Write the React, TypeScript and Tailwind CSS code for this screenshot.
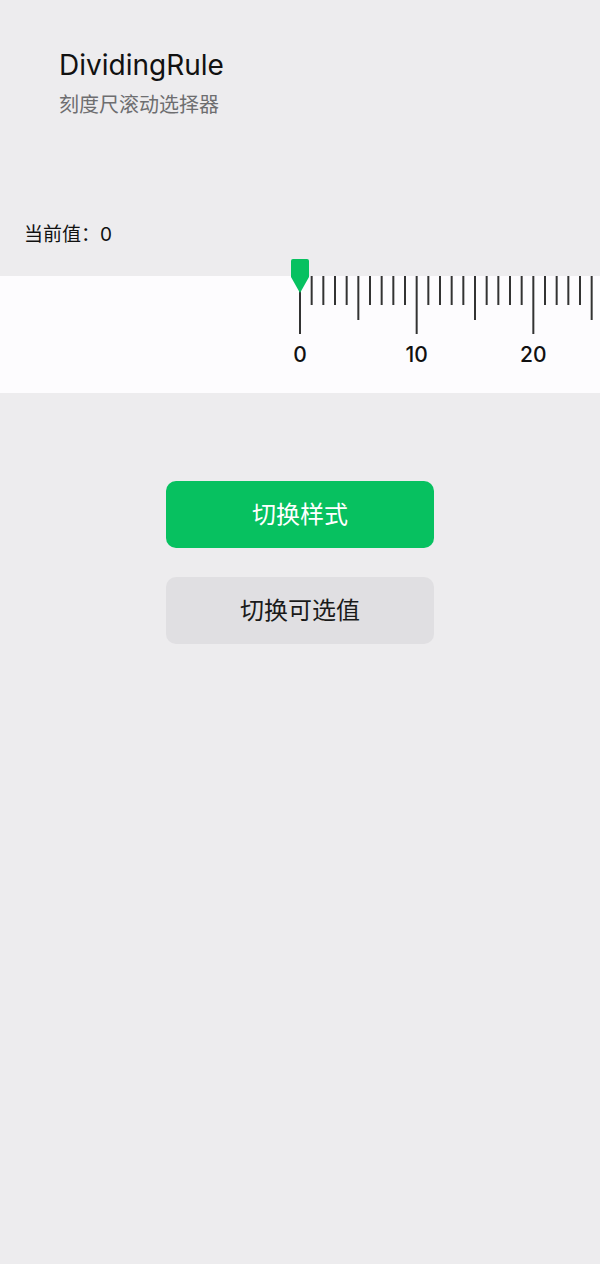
import { useState } from 'react';

const FONT = 'Inter, "Noto Sans CJK SC", sans-serif';

// spacing between two ticks on the ruler
const STEP = 350 / 30;
const ORIGIN = 300;

function Ruler({ value }: { value: number }) {
  const ticks = Array.from({ length: 26 }, (_, i) => i);

  return (
    <div className="relative mt-[11px] pt-[17px]">
      <div className="h-[117px] bg-[#fdfcfe]" />
      <svg
        className="absolute left-0 top-0"
        width={600}
        height={134}
        viewBox="0 0 600 134"
      >
        {ticks.map((i) => {
          const x = ORIGIN + (i - value) * STEP;
          const bottom = i % 10 === 0 ? 75 : i % 5 === 0 ? 61 : 46;
          return (
            <line key={i} x1={x} x2={x} y1={17} y2={bottom} stroke="#333333" strokeWidth={2} />
          );
        })}
        {ticks
          .filter((i) => i % 10 === 0)
          .map((i) => (
            <text
              key={i}
              x={ORIGIN + (i - value) * STEP}
              y={103}
              textAnchor="middle"
              fontSize={21}
              fontWeight={500}
              fill="#111111"
              style={{ fontFamily: FONT }}
            >
              {i}
            </text>
          ))}
        <path d="M293 0 H307 Q309 0 309 2 V18 L300 34 L291 18 V2 Q291 0 293 0 Z" fill="#07c160" />
      </svg>
    </div>
  );
}

export default function App() {
  const [value] = useState(0);

  return (
    <div className="min-h-[1264px] bg-[#edecee] text-[#111111]" style={{ fontFamily: FONT }}>
      {/* En-tête */}
      <div className="pl-[59px] pt-[48px]">
        <h1 className="text-[28px] leading-[34px] font-normal">DividingRule</h1>
        <p className="mt-[10px] text-[20px] leading-[26px] text-[#6e6e70]">刻度尺滚动选择器</p>
      </div>

      <p className="mt-[104px] pl-[24px] text-[19px] leading-[26px]">当前值：{value}</p>

      <Ruler value={value} />

      {/* Boutons */}
      <div className="mt-[88px] flex flex-col items-center gap-[29px]">
        <button className="h-[67px] w-[268px] rounded-[10px] bg-[#07c160] text-[24px] text-white">
          切换样式
        </button>
        <button className="h-[67px] w-[268px] rounded-[10px] bg-[#e0dfe2] text-[24px] text-[#1a1a1a]">
          切换可选值
        </button>
      </div>
    </div>
  );
}
